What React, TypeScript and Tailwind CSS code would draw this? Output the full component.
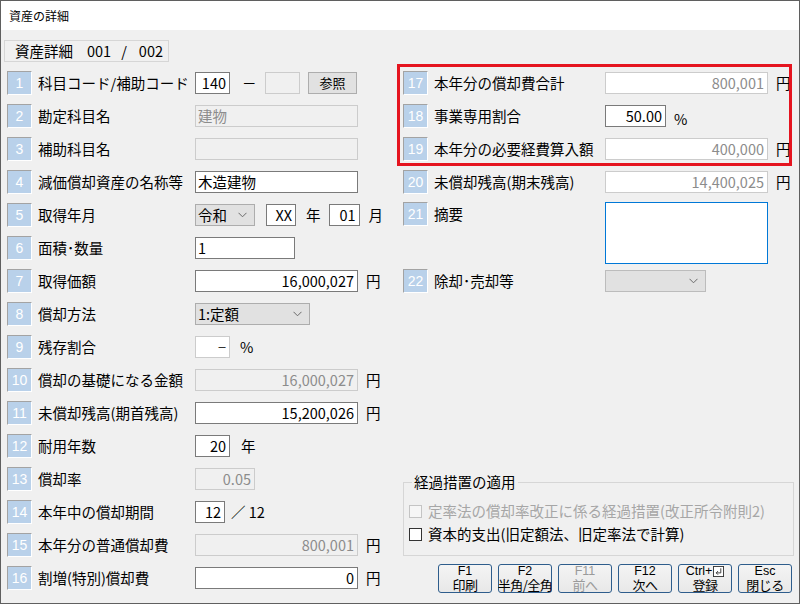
import React from "react";

const FONT = "font-['Noto_Sans_CJK_JP','Noto_Sans_CJK_SC',sans-serif]";

function NumBox({ n }: { n: number }) {
  return (
    <div className="w-[25px] h-[24px] shrink-0 flex items-center justify-center bg-[#b9d1ea] border border-t-[#a3a3a3] border-l-[#a3a3a3] border-r-white border-b-white text-white text-[14px] leading-none font-['Liberation_Sans',sans-serif]">
      {n}
    </div>
  );
}

type BoxKind = "edit" | "ro" | "roWhite" | "off";

function TextBox({
  value = "",
  w,
  right = true,
  kind = "edit",
}: {
  value?: string;
  w: number;
  right?: boolean;
  kind?: BoxKind;
}) {
  const styles: Record<BoxKind, string> = {
    edit: "bg-white border-[#7a7a7a] text-black",
    ro: "bg-[#f0f0f0] border-[#cccccc] text-[#8c8c8c]",
    roWhite: "bg-white border-[#cccccc] text-[#8c8c8c]",
    off: "bg-[#f0f0f0] border-[#cccccc] text-[#8c8c8c]",
  };
  return (
    <div
      style={{ width: w }}
      className={`h-[22px] shrink-0 border flex items-center text-[14.5px] leading-[20px] whitespace-nowrap overflow-hidden ${
        right ? "justify-end pr-[3px]" : "justify-start pl-[2px]"
      } ${styles[kind]}`}
    >
      {value}
    </div>
  );
}

function Chevron() {
  return (
    <svg width="9" height="6" viewBox="0 0 9 6" className="shrink-0">
      <polyline points="0.5,0.8 4.5,4.8 8.5,0.8" fill="none" stroke="#6a6a6a" strokeWidth="1" />
    </svg>
  );
}

function Select({ value = "", w, disabled = false }: { value?: string; w: number; disabled?: boolean }) {
  return (
    <div
      style={{ width: w }}
      className={`h-[22px] shrink-0 border flex items-center justify-between pl-[2px] pr-[7px] text-[14.5px] leading-[20px] text-black ${
        disabled ? "bg-[#e1e1e1] border-[#bcbcbc]" : "bg-[#e1e1e1] border-[#adadad]"
      }`}
    >
      <span>{value}</span>
      <Chevron />
    </div>
  );
}

function Row({
  n,
  label,
  labelW = 157,
  children,
}: {
  n: number;
  label: string;
  labelW?: number;
  children?: React.ReactNode;
}) {
  return (
    <div className="flex h-[33px] items-center">
      <NumBox n={n} />
      <span style={{ width: labelW }} className="ml-[6px] shrink-0 text-[14.5px] leading-[20px] text-black whitespace-nowrap">
        {label}
      </span>
      {children}
    </div>
  );
}

function Unit({ children, ml = 8 }: { children: React.ReactNode; ml?: number }) {
  return (
    <span style={{ marginLeft: ml }} className="text-[14.5px] leading-[20px] text-black whitespace-nowrap">
      {children}
    </span>
  );
}

function EnterIcon() {
  return (
    <svg width="11" height="11" viewBox="0 0 12 12" className="inline-block ml-[1px]">
      <rect x="0.5" y="0.5" width="11" height="11" fill="white" stroke="#333" strokeWidth="1" />
      <polyline points="8.5,2.5 8.5,7.5 3.5,7.5" fill="none" stroke="#333" strokeWidth="1" />
      <polyline points="5.5,5.5 3.5,7.5 5.5,9.5" fill="none" stroke="#333" strokeWidth="1" />
    </svg>
  );
}

function FnButton({ top, bottom, disabled = false }: { top: React.ReactNode; bottom: string; disabled?: boolean }) {
  return (
    <div
      className={`w-[54px] h-[29px] rounded-[3px] border border-[#2e5d8c] bg-gradient-to-b from-[#f4f4f4] to-[#e8e8e8] flex flex-col items-center justify-center ${
        disabled ? "text-[#9a9a9a]" : "text-black"
      }`}
    >
      <span className="h-[13px] flex items-center font-['Liberation_Sans',sans-serif] text-[12.5px] leading-[13px]">{top}</span>
      <span className="h-[14px] flex items-center whitespace-nowrap tracking-[-0.5px] text-[13px] leading-[14px]">{bottom}</span>
    </div>
  );
}

function CheckBox({ label, disabled = false }: { label: string; disabled?: boolean }) {
  return (
    <div className="flex items-center h-[20px]">
      <span
        className={`w-[13px] h-[13px] border shrink-0 ${
          disabled ? "border-[#c4c4c4] bg-[#f6f6f6]" : "border-[#333333] bg-white"
        }`}
      />
      <span className={`ml-[6px] text-[14.5px] leading-[20px] whitespace-nowrap ${disabled ? "text-[#a6a6a6]" : "text-black"}`}>
        {label}
      </span>
    </div>
  );
}

export default function App() {
  return (
    <div className={`w-[800px] h-[604px] border border-[#5f5f5f] bg-[#f0f0f0] flex flex-col overflow-hidden ${FONT}`}>
      {/* Title bar */}
      <div className="h-[29px] bg-white flex items-center pl-[8px] text-[12px] text-black">資産の詳細</div>

      {/* Tab */}
      <div className="mt-[10px] ml-[3px] w-[165px] h-[22px] border border-[#d6d6d6] flex items-center pl-[10px] text-[14.5px] leading-[20px] text-black whitespace-nowrap">
        <span>資産詳細</span>
        <span className="ml-[14px]">001</span>
        <span className="ml-[10px]">/</span>
        <span className="ml-[12px]">002</span>
      </div>

      <div className="mt-[4px] flex h-[528px]">
        {/* Left column */}
        <div className="w-[402px] pl-[6px] flex flex-col">
          <Row n={1} label="科目コード/補助コード">
            <TextBox value="140" w={35} />
            <span className="ml-[12px] w-[11px] text-[14.5px] leading-[20px]">－</span>
            <div className="ml-[12px]">
              <TextBox w={35} kind="off" />
            </div>
            <div className="ml-[8px] w-[49px] h-[22px] bg-[#e1e1e1] border border-[#adadad] flex items-center justify-center text-[13px] text-black">
              参照
            </div>
          </Row>
          <Row n={2} label="勘定科目名">
            <TextBox value="建物" w={163} right={false} kind="ro" />
          </Row>
          <Row n={3} label="補助科目名">
            <TextBox w={163} kind="ro" />
          </Row>
          <Row n={4} label="減価償却資産の名称等">
            <TextBox value="木造建物" w={163} right={false} />
          </Row>
          <Row n={5} label="取得年月">
            <Select value="令和" w={60} />
            <div className="ml-[11px]">
              <TextBox value="XX" w={30} />
            </div>
            <Unit ml={10}>年</Unit>
            <div className="ml-[8px]">
              <TextBox value="01" w={31} />
            </div>
            <Unit ml={9}>月</Unit>
          </Row>
          <Row n={6} label="面積･数量">
            <TextBox value="1" w={100} right={false} />
          </Row>
          <Row n={7} label="取得価額">
            <TextBox value="16,000,027" w={163} />
            <Unit>円</Unit>
          </Row>
          <Row n={8} label="償却方法">
            <Select value="1:定額" w={115} />
          </Row>
          <Row n={9} label="残存割合">
            <div className="w-[35px] h-[22px] shrink-0 border border-[#cccccc] bg-white flex items-center justify-end pr-[3px] text-[14.5px] leading-[20px] text-[#333]">
              −
            </div>
            <Unit ml={10}>%</Unit>
          </Row>
          <Row n={10} label="償却の基礎になる金額">
            <TextBox value="16,000,027" w={163} kind="ro" />
            <Unit>円</Unit>
          </Row>
          <Row n={11} label="未償却残高(期首残高)">
            <TextBox value="15,200,026" w={163} />
            <Unit>円</Unit>
          </Row>
          <Row n={12} label="耐用年数">
            <TextBox value="20" w={35} />
            <Unit ml={11}>年</Unit>
          </Row>
          <Row n={13} label="償却率">
            <TextBox value="0.05" w={60} kind="ro" />
          </Row>
          <Row n={14} label="本年中の償却期間">
            <TextBox value="12" w={30} />
            <Unit ml={6}>／ 12</Unit>
          </Row>
          <Row n={15} label="本年分の普通償却費">
            <TextBox value="800,001" w={163} kind="ro" />
            <Unit>円</Unit>
          </Row>
          <Row n={16} label="割増(特別)償却費">
            <TextBox value="0" w={163} />
            <Unit>円</Unit>
          </Row>
        </div>

        {/* Right column */}
        <div className="relative w-[396px] flex flex-col">
          <Row n={17} label="本年分の償却費合計" labelW={171}>
            <TextBox value="800,001" w={163} kind="roWhite" />
            <Unit>円</Unit>
          </Row>
          <Row n={18} label="事業専用割合" labelW={171}>
            <TextBox value="50.00" w={61} />
            <span className="ml-[8px] mt-[6px] text-[14.5px] leading-[20px]">%</span>
          </Row>
          <Row n={19} label="本年分の必要経費算入額" labelW={171}>
            <TextBox value="400,000" w={163} kind="roWhite" />
            <Unit>円</Unit>
          </Row>
          <Row n={20} label="未償却残高(期末残高)" labelW={171}>
            <TextBox value="14,400,025" w={163} kind="roWhite" />
            <Unit>円</Unit>
          </Row>
          <div className="flex h-[66px] items-start pt-[4px]">
            <NumBox n={21} />
            <span className="ml-[6px] w-[171px] text-[14.5px] leading-[24px] text-black">摘要</span>
            <div className="w-[163px] h-[62px] bg-white border border-[#0078d7]" />
          </div>
          <Row n={22} label="除却･売却等" labelW={171}>
            <Select w={101} disabled />
          </Row>

          {/* Group box */}
          <fieldset className="mt-auto w-[391px] border border-[#d6d6d6] pl-[5px] pr-[4px] pt-[9px] pb-[11px] flex flex-col gap-[3px]">
            <legend className="ml-[3px] px-[2px] text-[14.5px] leading-[20px] text-black">経過措置の適用</legend>
            <CheckBox label="定率法の償却率改正に係る経過措置(改正所令附則2)" disabled />
            <CheckBox label="資本的支出(旧定額法、旧定率法で計算)" />
          </fieldset>

          {/* Function buttons */}
          <div className="mt-[8px] mb-[1px] flex justify-end gap-[6px] pr-[7px]">
            <FnButton top="F1" bottom="印刷" />
            <FnButton top="F2" bottom="半角/全角" />
            <FnButton top="F11" bottom="前へ" disabled />
            <FnButton top="F12" bottom="次へ" />
            <FnButton
              top={
                <span className="flex items-center">
                  Ctrl+
                  <EnterIcon />
                </span>
              }
              bottom="登録"
            />
            <FnButton top="Esc" bottom="閉じる" />
          </div>

          {/* Highlight */}
          <div className="absolute left-[-6px] top-[-2px] w-[395px] h-[102px] border-[3px] border-[#e5141f] pointer-events-none" />
        </div>
      </div>
    </div>
  );
}
